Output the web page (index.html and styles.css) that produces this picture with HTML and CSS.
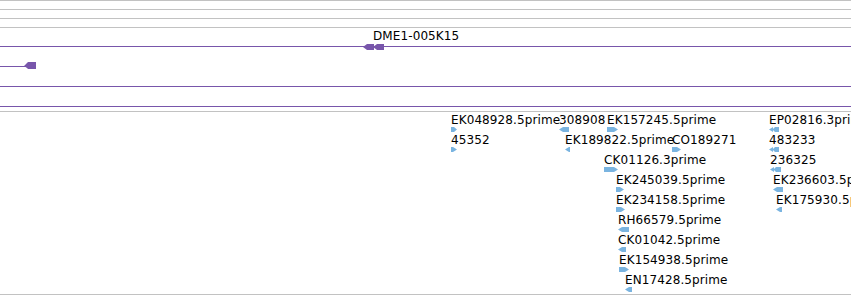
FILE: index.html
```html
<!DOCTYPE html>
<html lang="en">
<head>
    <meta charset="UTF-8">
    <title>Track view</title>
    <link rel="stylesheet" href="styles.css">
</head>
<body>
    <div class="view">
        <!-- scale bar rows -->
        <div class="ruler">
            <div class="ruler-row"></div>
            <div class="ruler-row"></div>
            <div class="ruler-row"></div>
        </div>

        <!-- gene track -->
        <div class="track gene-track">
            <div class="lane lane-a"></div>
            <div class="rule"></div>
            <div class="lane lane-b"></div>
            <div class="rule"></div>
            <div class="lane lane-c"></div>
            <div class="rule"></div>

            <div class="gene" style="left: 363px; top: 1px;">
                <span class="gene-label" style="margin-left: 10px;">DME1-005K15</span>
                <svg class="gene-glyph" width="22" height="6" viewBox="0 0 22 6">
                    <polygon points="0,3 4,0 11,0 11,6 4,6"/>
                    <polygon points="10,3 14,0 21,0 21,6 14,6"/>
                </svg>
            </div>

            <svg class="gene-end" width="37" height="7" viewBox="0 0 37 7">
                <rect x="0" y="4" width="26" height="1"/>
                <polygon points="24,4 27,1 28,0 36,0 36,7 28,7 27,6"/>
            </svg>
        </div>

        <!-- EST track -->
        <div class="track est-track">
            <div class="est" style="left: 451px; top: 2px;"><span>EK048928.5prime</span><svg width="6" height="5"><polygon points="0,0 3,0 6,2.5 3,5 0,5"/></svg></div>
            <div class="est" style="left: 559px; top: 2px;"><span>308908</span><svg width="10" height="5"><polygon points="4,0 10,0 10,5 4,5 0,2.5"/></svg></div>
            <div class="est" style="left: 607px; top: 2px;"><span>EK157245.5prime</span><svg width="11" height="5"><polygon points="0,0 7,0 11,2.5 7,5 0,5"/></svg></div>
            <div class="est" style="left: 769px; top: 2px;"><span>EP02816.3prime</span><svg width="10" height="5"><polygon points="0,2.5 4,0 4,2 6,0 10,0 10,5 6,5 4,3 4,5"/></svg></div>

            <div class="est" style="left: 451px; top: 22px;"><span>45352</span><svg width="6" height="5"><polygon points="0,0 2,0 6,2.5 2,5 0,5"/></svg></div>
            <div class="est" style="left: 565px; top: 22px;"><span>EK189822.5prime</span><svg width="5" height="5"><polygon points="4,0 5,0 5,5 4,5 0,2.5"/></svg></div>
            <div class="est" style="left: 672px; top: 22px;"><span>CO189271</span><svg width="9" height="5"><polygon points="0,0 5,0 9,2.5 5,5 0,5"/></svg></div>
            <div class="est" style="left: 769px; top: 22px;"><span>483233</span><svg width="10" height="5"><polygon points="0,2.5 4,0 4,2 6,0 10,0 10,5 6,5 4,3 4,5"/></svg></div>

            <div class="est" style="left: 604px; top: 42px;"><span>CK01126.3prime</span><svg width="14" height="5"><polygon points="0,0 10,0 14,2.5 10,5 0,5"/></svg></div>
            <div class="est" style="left: 770px; top: 42px;"><span>236325</span><svg width="11" height="5"><polygon points="0,2.5 4,0 4,2 6,0 11,0 11,5 6,5 4,3 4,5"/></svg></div>

            <div class="est" style="left: 616px; top: 62px;"><span>EK245039.5prime</span><svg width="8" height="5"><polygon points="0,0 4,0 8,2.5 4,5 0,5"/></svg></div>
            <div class="est" style="left: 773px; top: 62px;"><span>EK236603.5prime</span><svg width="10" height="5"><polygon points="4,0 10,0 10,5 4,5 0,2.5"/></svg></div>

            <div class="est" style="left: 616px; top: 82px;"><span>EK234158.5prime</span><svg width="9" height="5"><polygon points="0,0 5,0 9,2.5 5,5 0,5"/></svg></div>
            <div class="est" style="left: 776px; top: 82px;"><span>EK175930.5prime</span><svg width="6" height="5"><polygon points="4,0 6,0 6,5 4,5 0,2.5"/></svg></div>

            <div class="est" style="left: 618px; top: 102px;"><span>RH66579.5prime</span><svg width="11" height="5"><polygon points="4,0 11,0 11,5 4,5 0,2.5"/></svg></div>
            <div class="est" style="left: 618px; top: 122px;"><span>CK01042.5prime</span><svg width="8" height="5"><polygon points="4,0 8,0 8,5 4,5 0,2.5"/></svg></div>
            <div class="est" style="left: 619px; top: 142px;"><span>EK154938.5prime</span><svg width="10" height="5"><polygon points="0,0 6,0 10,2.5 6,5 0,5"/></svg></div>
            <div class="est" style="left: 625px; top: 162px;"><span>EN17428.5prime</span><svg width="7" height="5"><polygon points="4,0 7,0 7,5 4,5 0,2.5"/></svg></div>
        </div>
    </div>
</body>
</html>
```

FILE: styles.css
```css
html, body {
    margin: 0;
    background-color: #fff;
}

body {
    width: 851px;
    height: 295px;
    overflow: hidden;
    font-family: "DejaVu Sans", Verdana, sans-serif;
    font-size: 12px;
    letter-spacing: 0.1px;
    color: #000;
}

.view {
    width: 851px;
}

/* scale bar */
.ruler-row {
    height: 8px;
    border-top: 1px solid #c2c2c2;
}

.track {
    position: relative;
    border-top: 1px solid #c2c2c2;
}

/* gene track with its purple guide lines */
.gene-track {
    height: 83px;
}

.lane-a { height: 18px; }
.lane-b { height: 39px; }
.lane-c { height: 19px; }

.rule {
    height: 1px;
    background-color: #7856ab;
}

.gene {
    position: absolute;
    line-height: 14px;
    white-space: nowrap;
}

.gene-label {
    display: block;
    height: 15px;
}

.gene-glyph,
.gene-end {
    display: block;
    fill: #7856ab;
}

.gene-end {
    position: absolute;
    left: 0;
    top: 34px;
}

/* EST alignments */
.est-track {
    height: 182px;
    border-bottom: 1px solid #c2c2c2;
}

.est {
    position: absolute;
    white-space: nowrap;
    line-height: 13px;
}

.est span {
    display: block;
}

.est svg {
    display: block;
    fill: #7ab4e0;
}
```
